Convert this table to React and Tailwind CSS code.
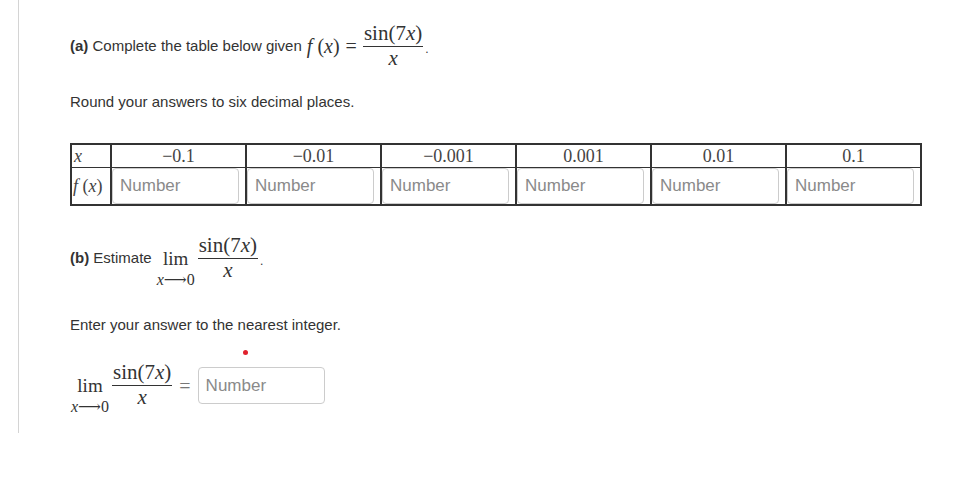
import React from "react";

const serif = { fontFamily: '"Liberation Serif", "DejaVu Serif", serif' };

function Frac({ num, den }) {
  return (
    <span className="inline-flex flex-col items-center text-[21px] leading-none" style={serif}>
      <span className="px-[1px] pb-[2px]">{num}</span>
      <span className="self-stretch border-t border-[#333]"></span>
      <span className="px-[1px] pt-[1px]">{den}</span>
    </span>
  );
}

const SinNum = () => (
  <>
    sin(7<i>x</i>)
  </>
);

function Lim() {
  return (
    <span className="inline-flex w-[40px] flex-col items-center" style={serif}>
      <span className="text-[19px] leading-[20px]">lim</span>
      <span className="whitespace-nowrap text-[16px] leading-[21px]">
        <i>x</i>⟶0
      </span>
    </span>
  );
}

function NumInput({ className = "" }) {
  return (
    <input
      type="text"
      placeholder="Number"
      className={`block rounded-[4px] border border-[#ccc] bg-white pl-[7px] text-[17px] text-[#333] placeholder:text-[#8a8a8a] outline-none ${className}`}
      style={{ fontFamily: '"Liberation Sans", Arial, sans-serif' }}
    />
  );
}

export default function App() {
  const cols = ["−0.1", "−0.01", "−0.001", "0.001", "0.01", "0.1"];
  return (
    <div
      className="w-[958px] h-[486px] bg-white text-[#333] text-[15px] pl-[18px]"
      style={{ fontFamily: '"Liberation Sans", Arial, sans-serif' }}
    >
      <div className="border-l border-[#d4d4d4] h-[433px] pl-[51px] pt-[24px]">
        <div className="flex h-[44px] items-center">
          <span>
            <b>(a)</b> Complete the table below given
          </span>
          <span className="ml-[5px] whitespace-pre text-[20px]" style={serif}>
            <i>f</i> (<i>x</i>)
          </span>
          <span className="ml-[6px] mr-[6px] text-[20px]" style={serif}>=</span>
          <Frac num={<SinNum />} den={<i>x</i>} />
          <span className="ml-[2px] mt-[5px] text-[12px]">.</span>
        </div>

        <div className="mt-[23px] h-[22px] leading-[22px]">Round your answers to six decimal places.</div>

        <table className="mt-[30px] border-collapse border-y-2 border-r-2 border-l border-[#333]">
          <tbody>
            <tr className="h-[23px]">
              <td className="w-[40px] border-x-2 border-b border-[#333] pl-[2px] text-[18px] leading-none text-[#444]" style={serif}>
                <i>x</i>
              </td>
              {cols.map((c) => (
                <td
                  key={c}
                  className="w-[135px] border-x-2 border-b border-[#333] text-center text-[18px] leading-none text-[#444]"
                  style={serif}
                >
                  {c}
                </td>
              ))}
            </tr>
            <tr className="h-[37px]">
              <td className="border-x-2 border-[#333] pl-[1px] text-[18px] leading-none whitespace-pre text-[#444]" style={serif}>
                <i>f</i> (<i>x</i>)
              </td>
              {cols.map((c) => (
                <td key={c} className="border-x-2 border-[#333] p-0 align-middle">
                  <NumInput className="h-[36px] w-[127px]" />
                </td>
              ))}
            </tr>
          </tbody>
        </table>

        <div className="mt-[31px] flex h-[44px] items-center">
          <span>
            <b>(b)</b> Estimate
          </span>
          <span className="ml-[4px] mt-[21px]">
            <Lim />
          </span>
          <span className="ml-[2px] -mt-[2px]">
            <Frac num={<SinNum />} den={<i>x</i>} />
          </span>
          <span className="ml-[2px] mt-[5px] text-[12px]">.</span>
        </div>

        <div className="mt-[33px] h-[22px] leading-[22px]">Enter your answer to the nearest integer.</div>

        <div className="ml-[173px] mt-[14px] h-[5px] w-[5px] rounded-full bg-[#e0212d]"></div>

        <div className="mt-[9px] flex h-[44px] items-center">
          <span className="mt-[21px]">
            <Lim />
          </span>
          <span className="ml-[2px] -mt-[1px]">
            <Frac num={<SinNum />} den={<i>x</i>} />
          </span>
          <span className="mx-[7px] text-[20px] text-[#777]" style={serif}>=</span>
          <NumInput className="h-[37px] w-[127px]" />
        </div>
      </div>
    </div>
  );
}
